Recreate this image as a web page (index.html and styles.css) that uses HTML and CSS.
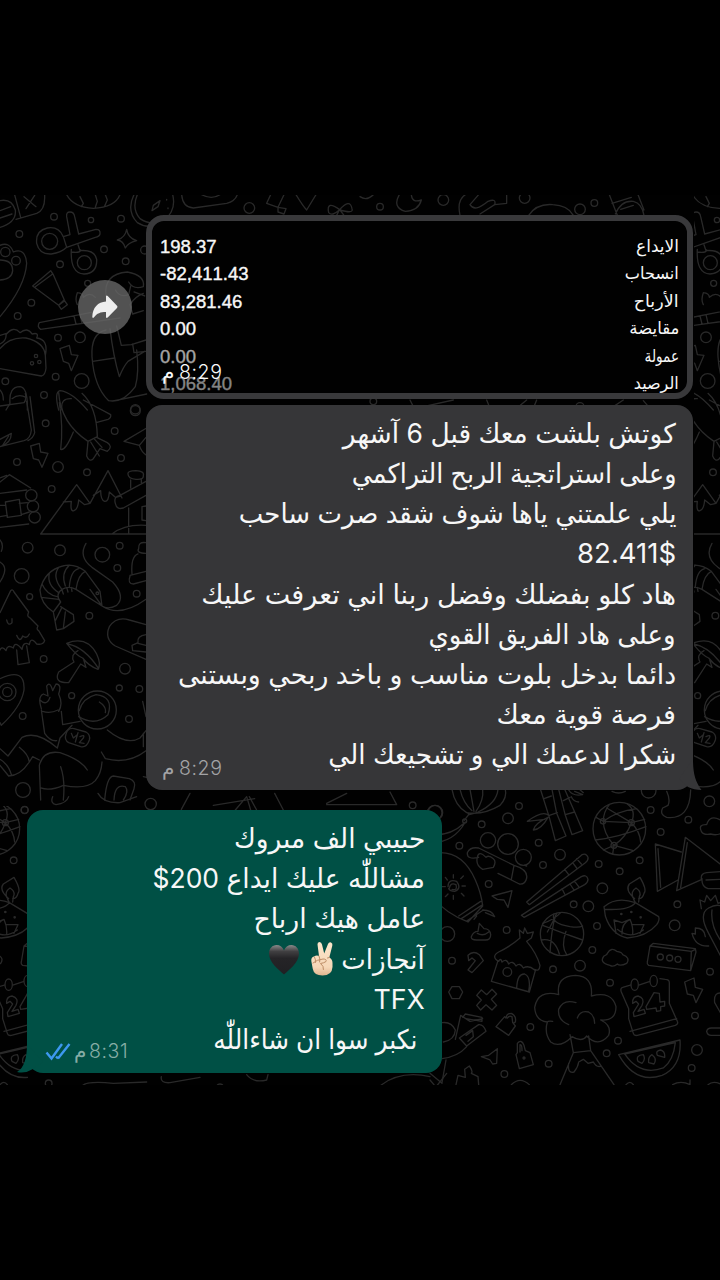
FILE: index.html
```html
<!DOCTYPE html>
<html lang="ar">
<head>
<meta charset="utf-8">
<title>محادثة</title>
<link rel="stylesheet" href="styles.css">
</head>
<body>
<main class="chat">
  <svg class="wallpaper" viewBox="0 195 720 890" width="720" height="890" aria-hidden="true">
    <defs>
      <g id="doodles">
        <!-- upper tools, snacks and sweets -->
        <g transform="translate(0 190) scale(.33333)">
          <path d="M40 0L62 82M48 88L110 70Q135 60 134 20V0M72 20L108 50M104 16L78 56M0 32Q35 25 46 60Q50 98 0 112M0 62L32 50M0 84L36 72"/>
          <path d="M200 14Q220 52 280 55Q345 52 360 14M240 20L250 40L244 50M286 14L292 34L286 52M316 14L322 30L314 48"/>
          <path d="M402 14Q378 62 412 98Q448 122 492 92Q530 60 518 14M412 14Q394 56 420 86Q452 108 480 92M456 62L460 46L480 32L474 50ZM500 28v2M504 54v2"/>
          <path d="M545 14Q548 52 580 54L680 40Q705 34 712 14M605 14Q635 30 660 14M800 40L812 14M800 40L834 52L852 14M834 52L858 56L852 72L834 66ZM888 14Q910 50 920 60L948 14"/>
          <path d="M1018 58Q978 30 986 68Q996 80 1018 60Q1050 24 1056 56Q1062 72 1020 60M1018 60L1010 76M1020 60L1032 76"/>
          <path d="M200 80Q198 66 210 66Q222 66 224 80L236 132L288 118Q302 118 300 132Q298 140 286 142L200 172L190 140L210 134Z"/>
          <path d="M190 140Q176 108 142 114Q106 122 110 160Q118 194 154 192Q184 188 200 172M214 178Q210 250 252 252Q292 250 290 208Q284 178 240 182L234 164M214 186Q240 190 242 180"/>
          <circle cx="149" cy="154" r="24"/><circle cx="253" cy="218" r="21"/>
          <path d="M380 118Q384 144 410 152Q384 158 376 174Q370 152 352 150Q376 142 380 118Z"/>
          <circle cx="162" cy="80" r="10"/><circle cx="273" cy="90" r="8"/><circle cx="363" cy="86" r="10"/><circle cx="58" cy="132" r="10"/><circle cx="312" cy="178" r="10"/><circle cx="377" cy="214" r="10"/><circle cx="180" cy="223" r="10"/><circle cx="94" cy="338" r="10"/><circle cx="53" cy="378" r="10"/><circle cx="263" cy="280" r="9"/><circle cx="434" cy="180" r="12"/><circle cx="748" cy="54" r="16"/>
          <path d="M0 166Q28 154 40 186Q76 172 80 220Q76 290 0 380M0 210Q38 210 38 242Q36 268 0 270"/><circle cx="16" cy="186" r="14"/><circle cx="48" cy="212" r="13"/>
          <path d="M98 288L152 242L160 254L194 332L176 346ZM106 290L158 252M176 346L192 330L202 344L184 358Z"/>
          <path d="M232 308Q224 330 232 344M232 308Q250 310 250 322Q270 304 286 322M360 384L122 418Q110 410 118 398L350 352M222 378L228 402M240 374L246 400"/>
          <path d="M318 318Q310 252 382 246Q436 256 430 290Q400 300 386 276M430 310Q404 320 390 344L398 372L430 362M346 300Q360 324 386 314L392 288M402 306L434 318M330 416Q340 500 358 560Q370 530 384 514L434 484M350 408L364 466L394 464L438 450M398 462L402 488L438 484"/>
          <path d="M318 420Q272 430 276 500Q282 590 326 632Q370 640 406 590Q418 548 410 480M278 514L344 504M346 632L440 612"/>
          <path d="M0 462Q20 452 18 434Q40 406 60 428Q82 410 96 432Q118 426 110 444Q146 448 136 496L138 534Q136 556 124 558L0 536M0 476Q28 440 78 444Q132 456 136 496M0 436L20 430"/>
          <circle cx="108" cy="498" r="5"/><circle cx="96" cy="520" r="5"/><circle cx="118" cy="516" r="5"/>
          <path d="M180 476L208 466L214 494L234 496L214 542L206 520L190 514Z"/>
          <circle cx="174" cy="443" r="10"/><circle cx="240" cy="442" r="16"/><circle cx="167" cy="560" r="10"/><circle cx="245" cy="573" r="22"/><circle cx="132" cy="615" r="10"/><circle cx="16" cy="574" r="10"/><circle cx="406" cy="658" r="14"/>
          <path d="M30 640Q26 590 60 590Q84 592 82 660M30 640L18 660M36 626Q56 610 78 622M0 600Q10 610 10 630M176 660Q162 606 180 602Q216 606 262 660M186 660Q180 624 214 626"/>
        </g>
        <!-- rocket, mountains, sea life and astronaut -->
        <g transform="translate(0 400) scale(.33333)">
          <path d="M176 -22Q182 70 264 124L292 110Q290 20 246 -20M178 8Q190 80 182 148Q196 154 220 96M250 0L332 44Q334 54 324 58L288 68M264 124L260 168Q268 188 280 176L300 146L322 154Q340 140 322 128L290 112M272 126L298 168M284 118L306 142"/>
          <path d="M0 18L72 8Q80 0 76 -20M80 4L94 90Q92 116 72 122L0 140M90 -10L104 98Q100 114 84 122M0 118L34 100Q34 130 0 140M8 136L26 108"/>
          <path d="M92 138L118 130L122 156L144 160L126 202L116 180L100 176Z"/>
          <path d="M372 124L440 84M372 124L418 136L438 112M418 136Q424 156 440 166"/>
          <circle cx="406" cy="32" r="15"/><circle cx="344" cy="93" r="10"/><circle cx="137" cy="70" r="10"/><circle cx="51" cy="186" r="10"/><circle cx="174" cy="201" r="16"/><circle cx="363" cy="174" r="10"/><circle cx="261" cy="217" r="10"/><circle cx="155" cy="267" r="10"/>
          <path d="M0 246L28 224L92 264M0 234L20 226M0 280L80 270M0 382L86 372M0 316L16 316M16 306L58 298L64 346L22 352ZM58 310L82 308M64 344L88 336M0 350L22 346"/>
          <circle cx="94" cy="286" r="17"/><circle cx="99" cy="319" r="17"/><circle cx="104" cy="352" r="17"/>
          <path d="M122 402L230 254L270 310L324 212L366 294M122 402H438M190 306L214 304Q210 336 222 332Q234 328 236 300L254 314L270 310M280 286L302 272Q302 300 314 304Q326 306 328 276L346 292L362 288M346 310Q340 290 360 286L438 244M346 310Q350 330 370 324L438 286M384 222Q382 212 408 212Q434 214 430 226Q432 240 408 238Q384 236 384 222M392 240V264M424 238V252M386 324V402M336 402Q374 372 438 376M438 318L426 320V360L438 362"/>
          <circle cx="83" cy="443" r="16"/><circle cx="180" cy="451" r="16"/><circle cx="307" cy="464" r="22"/><circle cx="359" cy="437" r="10"/><circle cx="352" cy="504" r="10"/><circle cx="65" cy="528" r="22"/><circle cx="410" cy="581" r="10"/><circle cx="89" cy="590" r="9"/><circle cx="268" cy="647" r="10"/><circle cx="131" cy="777" r="10"/><circle cx="375" cy="806" r="16"/><circle cx="358" cy="864" r="9"/><circle cx="418" cy="867" r="10"/><circle cx="215" cy="887" r="9"/><circle cx="387" cy="957" r="10"/><circle cx="68" cy="948" r="10"/><circle cx="69" cy="1170" r="22"/>
          <path d="M0 420Q12 434 4 454M0 486Q24 500 8 532L0 546"/>
          <path d="M306 618L228 568Q234 524 256 514L300 574ZM256 514Q222 488 188 498Q134 512 120 570Q122 612 160 636L182 606Q164 584 186 568Q206 556 228 568M236 506Q212 512 208 560M208 496Q182 520 196 558M176 502Q156 530 184 566M148 520Q140 554 176 578M126 552Q140 584 172 590M124 592L176 598M160 636L170 690L190 686L222 664L220 644L182 620M166 662L184 626M190 684L196 636M186 570l4 12M200 562l4 14M214 562l2 12M258 430Q234 470 276 502L338 546Q378 590 350 616Q324 630 306 618M270 568L306 618Q360 654 438 598"/><circle cx="292" cy="580" r="4"/>
          <path d="M438 428Q414 424 416 446Q408 460 438 460M396 522Q392 470 414 462M390 528Q382 552 400 552L438 542M390 526L438 514"/>
          <path d="M32 572L0 638M32 572Q38 566 42 576L86 636Q80 650 88 652L114 678Q108 688 116 692L134 722Q130 736 110 732M110 732Q92 708 88 734Q70 722 66 748Q44 720 40 744Q22 732 18 752Q6 736 0 750M20 660Q24 680 36 668V656M50 706Q60 730 68 708Q80 718 88 702M50 750L54 794L88 788L80 738"/>
          <path d="M200 730Q260 706 290 762Q304 792 294 808Q266 798 248 774Q228 766 200 730ZM204 732Q254 742 296 806M234 752Q210 764 222 786L176 816Q160 850 206 848L242 792L258 802L250 776"/>
          <path d="M438 674L388 660Q350 648 328 680Q312 716 346 738L438 778M438 704Q410 708 414 728L396 736L398 752L438 756M414 730L438 736"/>
          <path d="M0 836Q76 800 72 870Q64 920 4 976L0 968"/><circle cx="22" cy="876" r="26"/><circle cx="22" cy="876" r="14"/>
          <circle cx="292" cy="930" r="57"/><path d="M236 950Q286 980 324 944Q342 890 288 884Q248 894 238 932M298 906Q320 920 316 938M124 926Q112 890 130 882L144 888L140 858Q150 842 158 872L168 852Q186 852 176 882Q190 912 176 934M128 934Q150 942 174 930M124 930L134 1000Q150 1024 170 1022M184 934L188 974L240 964M120 900Q140 920 150 892M0 1046L24 1068L66 1012Q110 990 172 1044L180 1014L216 976M58 1042Q86 1064 88 1086Q60 1128 26 1128L0 1096M0 1078Q26 1094 34 1124M88 1086L98 1070L118 1080M118 1096Q130 1050 180 1058Q244 1080 262 1110M118 1096L122 1200M182 1100Q196 1140 190 1200M122 1164Q150 1174 190 1156Q260 1170 286 1142Q304 1120 306 1086M304 1056L316 1076Q384 1094 438 1052M322 990Q380 1038 420 1014L438 992M430 1000V1040M428 904L438 950"/>
          <path d="M198 1002Q204 982 222 986L258 996Q272 1004 268 1020Q260 1044 242 1040L206 1028Q192 1020 198 1002ZM214 1000L220 1014L232 1004M234 998L226 1026M240 1010Q256 1002 250 1014L238 1028L252 1030"/>
          <path d="M314 1200Q320 1130 340 1128L388 1136Q410 1144 402 1166L390 1200M342 1200Q344 1150 376 1160Q388 1174 370 1200M430 1130L440 1132"/>
        </g>
        <!-- lower field of party and travel drawings -->
        <g transform="translate(430 780) scale(.33333)">
          <circle cx="16" cy="98" r="22"/><circle cx="267" cy="78" r="10"/><circle cx="234" cy="115" r="16"/><circle cx="155" cy="133" r="10"/><circle cx="88" cy="197" r="10"/><circle cx="326" cy="188" r="10"/><circle cx="390" cy="224" r="16"/><circle cx="339" cy="255" r="10"/><circle cx="176" cy="312" r="10"/><circle cx="506" cy="252" r="10"/><circle cx="569" cy="274" r="10"/><circle cx="629" cy="241" r="10"/><circle cx="517" cy="325" r="16"/><circle cx="475" cy="379" r="16"/><circle cx="431" cy="373" r="10"/><circle cx="501" cy="438" r="10"/><circle cx="487" cy="510" r="10"/><circle cx="742" cy="373" r="10"/><circle cx="734" cy="436" r="16"/><circle cx="230" cy="450" r="10"/><circle cx="52" cy="462" r="22"/><circle cx="66" cy="542" r="10"/><circle cx="369" cy="568" r="10"/><circle cx="450" cy="557" r="16"/><circle cx="540" cy="608" r="10"/><circle cx="840" cy="575" r="10"/><circle cx="795" cy="707" r="10"/><circle cx="801" cy="810" r="16"/><circle cx="785" cy="864" r="10"/><circle cx="564" cy="782" r="10"/><circle cx="530" cy="820" r="10"/><circle cx="301" cy="741" r="10"/><circle cx="356" cy="851" r="10"/><circle cx="223" cy="882" r="10"/><circle cx="662" cy="90" r="10"/><circle cx="838" cy="64" r="16"/><circle cx="775" cy="119" r="10"/><circle cx="692" cy="156" r="10"/><circle cx="656" cy="32" r="22"/>
          <path d="M66 28Q74 76 110 98Q160 106 210 76Q232 52 226 28M90 28Q100 70 126 92M120 28Q126 60 132 94M158 28Q162 60 138 94M204 28Q200 70 144 96M112 98L118 104L140 98M116 104L102 122M0 164Q60 170 102 130M0 188Q70 190 106 126"/><circle cx="104" cy="123" r="6"/>
          <circle cx="174" cy="181" r="23"/><circle cx="234" cy="192" r="31"/><circle cx="280" cy="232" r="24"/>
          <path d="M146 232Q110 240 112 218Q120 200 146 204L252 256Q294 268 290 294Q286 314 268 312L204 280M168 232Q146 210 142 232Q136 256 158 268L190 262Q200 244 190 236Q176 224 168 232M252 256L244 298M290 258L284 256"/>
          <path d="M0 222Q92 200 136 300Q154 340 158 378L114 426Q50 402 0 346M86 408L152 364M94 416L158 374M112 422L160 390M158 390Q186 390 194 410L166 398M132 418L140 408M58 324Q62 306 78 314Q84 332 66 328M54 320Q54 296 80 304Q96 326 74 334Q60 334 56 326M70 284v10M46 292l6 8M36 320h10M46 350l8-8M70 346v12M94 340l8 8M96 318h10M92 296l8-8"/>
          <path d="M186 348L246 332L234 382L222 360L202 358ZM124 470Q130 454 144 454L148 430L162 446Q180 446 182 464Q182 480 166 480H140Q122 480 124 470M142 460Q160 470 176 456"/>
          <path d="M290 366L456 224Q468 218 474 232Q476 240 466 248L298 374ZM274 406L454 290Q470 282 474 298Q474 308 464 314L282 412ZM404 268L416 284M428 248L440 264M440 236L454 252M396 326L404 342M420 312L432 330M434 304L446 320"/>
          <path d="M332 30L358 112L376 182L408 168L380 100L366 28M342 56L364 48M358 106L382 98M386 28L406 106L426 164L458 152L434 96L404 28M400 62L420 52M406 104L434 96M356 106Q338 90 292 124L344 118M354 112Q314 130 310 150Q334 148 354 112M416 30Q428 50 458 44L434 34M424 50Q430 64 446 66M448 28L460 38M546 34Q566 44 586 34"/>
          <circle cx="568" cy="146" r="79"/><path d="M498 112L520 124Q560 94 620 86M520 124L604 128Q620 92 592 72M496 180Q560 174 648 140M520 124Q520 160 552 196L610 212M552 196Q590 170 604 128M604 128L644 118M552 196L520 210M538 74Q520 96 520 124M530 84L604 128M552 196L548 222M604 128Q630 154 632 186"/><circle cx="519" cy="124" r="8"/><circle cx="604" cy="128" r="9"/><circle cx="552" cy="196" r="9"/>
          <path d="M710 34Q722 60 714 76L698 84Q688 104 710 112Q780 120 782 30M814 154Q804 132 830 134Q840 102 872 120M814 154Q820 166 842 162Q860 168 878 158M676 192L682 334L744 300M676 192L754 216M684 206L692 322M766 172L740 332L816 298M766 172L876 256M772 188L752 322M814 296Q812 280 830 278L880 274M816 296Q814 320 834 326H878M828 300L878 298"/>
          <path d="M614 356Q584 330 598 312L630 292Q652 330 642 340Q638 356 626 356M608 352Q602 334 618 324Q636 336 628 350L626 366M610 356L616 368M522 380Q560 348 616 368L686 410Q690 420 680 434Q650 470 592 474Q544 464 526 408ZM524 388Q600 392 616 368M558 460L552 420L576 428L600 418Q610 440 608 464M576 462Q574 430 600 418M608 434L642 434L630 460M562 448Q600 480 640 450"/><circle cx="574" cy="402" r="2"/><circle cx="604" cy="396" r="2"/><circle cx="632" cy="412" r="2"/>
          <circle cx="396" cy="462" r="65"/><path d="M372 402Q360 430 420 440Q448 444 458 438M338 436Q400 460 458 480M392 398Q372 420 338 430M334 480Q374 472 388 522M360 518Q366 430 380 400M352 456Q372 420 380 400M408 454Q392 500 410 524"/>
          <path d="M206 544Q182 530 206 516Q240 500 270 474L268 450L280 460L284 444L292 460L310 456L304 474L290 484Q320 520 330 556Q328 576 314 568M206 544Q212 532 216 546Q230 534 236 552Q248 540 258 558Q270 546 280 564Q296 554 314 570M204 542L184 604L298 636L316 572M260 624Q262 580 284 582Q304 590 296 634"/><circle cx="232" cy="576" r="13"/>
          <path d="M114 526Q130 510 148 524L160 542L126 578L114 570L136 542L126 534L116 542ZM56 636L66 620H88L98 636L88 656H66ZM140 646L154 630L170 644L186 628L200 642L184 658L200 676L186 690L168 674L152 690L140 676L154 660Z"/>
          <path d="M540 556Q506 548 522 528Q532 524 532 520Q544 500 560 514Q576 516 578 524Q602 532 590 550Q570 560 562 552Q550 562 540 556ZM660 498L670 490L796 506L798 516L782 572L656 556Q650 552 652 546ZM660 498L784 514L782 570M784 514L796 508"/><circle cx="691" cy="531" r="9"/><circle cx="719" cy="534" r="9"/><circle cx="744" cy="538" r="9"/>
          <path d="M386 644Q378 588 436 586Q490 588 484 648Q546 632 558 680Q558 724 512 720Q546 736 536 766Q504 804 470 768Q456 788 426 770Q390 806 362 786Q342 760 352 726Q316 722 314 682Q324 628 386 644M438 668Q400 656 386 688Q382 720 416 734M442 714Q450 690 476 696Q494 706 494 730M352 726Q354 722 368 724M420 764L430 818L390 914M476 768L482 812L552 914M430 818L482 812M416 850Q412 882 432 876Q444 862 446 846L460 838L474 850L490 846Q500 864 514 858"/>
          <path d="M606 614L578 622Q570 624 574 636L596 686V716L610 760Q612 768 622 766L736 736Q746 732 742 724L718 670V608Q718 598 706 598L690 596M624 616L660 604M600 754L740 716"/><ellipse cx="614" cy="614" rx="11" ry="17" fill="#010101"/><ellipse cx="671" cy="603" rx="11" ry="17" fill="#010101"/>
          <path d="M608 670Q606 650 624 648Q646 654 636 676L624 694L642 688L646 700L612 710L610 698L626 672L618 664ZM648 680L672 638L688 640L690 666L704 664L704 678L692 680L692 692L680 694L678 684L650 688Z"/>
          <path d="M764 606L792 594L796 622L818 628L798 668L790 646L772 642Z"/>
          <path d="M566 824L750 780Q756 860 696 886Q616 914 566 824ZM584 822L736 788Q730 842 700 864Q630 890 584 822M624 844Q616 826 640 824Q648 838 636 850ZM656 848Q654 830 666 824Q682 836 672 852ZM682 826Q676 812 692 810Q706 814 704 832Z"/>
          <path d="M198 740L224 710L228 714Q230 700 244 700Q260 708 256 726L250 730L256 738L236 766ZM232 714Q238 706 246 710L248 728M258 824L262 818V790Q274 776 282 796L286 812L300 818L310 854L268 866ZM270 816V794Q276 792 276 812M154 830L176 826L202 806L200 850L188 852L180 840Z"/><circle cx="282" cy="834" r="3"/>
          <path d="M36 728Q64 724 76 750Q74 780 40 786M76 778L92 706L120 724L158 716M98 712L106 702L156 712L156 724L108 716M88 774L146 734Q160 732 168 754L110 798ZM108 766L128 752L130 770L114 784M36 836Q84 830 110 800M48 840L36 908M0 880L36 910M78 914L84 886L106 892L104 868L118 858Q130 874 124 880L144 890L146 914M244 914Q270 888 298 914M0 900L12 914M728 914Q752 900 780 914V900M588 914Q600 900 610 914M834 914Q850 900 876 914"/>
          <path d="M830 754Q832 744 844 744H880M830 754Q832 766 844 766H880M878 640Q850 634 854 668L878 710M814 386L810 360L824 366L830 346L842 362L856 346L864 370L878 366M836 384Q804 402 836 460L878 540M836 384Q860 370 878 380M846 390Q840 440 878 490M836 498Q796 500 786 460L796 462V444Q824 444 826 470"/>
        </g>
        <!-- strips between the bubbles -->
        <g transform="translate(360 190) scale(.33333)">
          <path d="M118 14Q96 52 136 64Q176 62 184 30Q156 40 154 14M0 20Q20 34 40 14M300 76Q290 30 316 14M330 44L356 14M330 44Q344 68 384 34Q410 24 404 44L360 72M404 44L440 40V14M506 76Q530 40 578 44Q624 46 640 76M748 14L772 76M756 40L814 22M766 72Q784 30 820 34Q846 40 852 76M782 58L820 46M834 14L852 60"/><circle cx="60" cy="50" r="10"/><circle cx="250" cy="30" r="16"/><circle cx="494" cy="24" r="16"/><circle cx="660" cy="58" r="16"/><circle cx="703" cy="39" r="10"/>
          <path d="M150 630L160 650M190 650L280 630M380 630L390 655M470 655L500 630M520 655L530 630M760 650L790 630M850 632L870 655"/><circle cx="40" cy="634" r="10"/><circle cx="660" cy="650" r="12"/>
        </g>
        <g transform="translate(0 800) scale(.33333)">
          <path d="M158 -10Q150 10 168 14Q200 10 206 -10M294 -20Q310 10 360 8L410 -10M544 28L570 -20M640 16L764 -4M706 30L740 -10L752 30M770 30L748 -10M980 10L1040 -20M980 14H1190L1170 -24M824 -20L850 30M484 830Q480 850 510 848L600 832M740 824Q760 850 800 840L804 824M246 858Q260 842 340 850L440 846M1140 858Q1200 810 1290 830M1310 858L1340 820"/><circle cx="74" cy="30" r="11"/><circle cx="452" cy="12" r="17"/><circle cx="1238" cy="16" r="10"/><circle cx="1304" cy="38" r="22"/><circle cx="146" cy="850" r="10"/><circle cx="660" cy="862" r="10"/>
        </g>
      </g>
    </defs>
    <rect y="195" width="720" height="890" fill="#010101"/>
    <use href="#doodles" class="ink"/>
    <svg x="694" y="195" width="26" height="600" viewBox="694 195 26 600"><use href="#doodles" x="626" class="ink"/></svg>
    <svg x="0" y="806" width="28" height="279" viewBox="0 806 28 279"><use href="#doodles" x="-626" class="ink"/></svg>
  </svg>

  <div class="thread">
    <div class="row">
      <button class="forward" aria-label="إعادة توجيه">
        <svg width="28" height="24" viewBox="0 0 28 24"><path d="M15 1.3V6.500C7 7 1.500 12.500 1.300 22Q1.800 23.600 3 22.300C6 18.300 9.500 17 15 17V22Q15.300 23.600 16.700 22.500L26 13Q27 11.800 26 10.700L16.700 1Q15.400 0 15 1.300Z"/></svg>
      </button>
      <article class="bubble photo" dir="rtl">
        <dl class="stats">
          <div><dt><span class="fit">الايداع</span></dt><dd>198.37</dd></div>
          <div><dt><span class="fit x95">انسحاب</span></dt><dd>-82,411.43</dd></div>
          <div><dt><span class="fit x103">الأرباح</span></dt><dd>83,281.46</dd></div>
          <div><dt><span class="fit x97">مقايضة</span></dt><dd>0.00</dd></div>
          <div><dt><span class="fit x80">عمولة</span></dt><dd class="dim">0.00</dd></div>
          <div><dt><span class="fit x94">الرصيد</span></dt><dd class="dimmer">1,068.40</dd></div>
        </dl>
        <time class="time over" dir="ltr"><i>م</i><span>8:29</span></time>
      </article>
    </div>

    <article class="bubble incoming" dir="rtl">
      <p><span class="fit x98">كوتش بلشت معك قبل 6 آشهر</span></p>
      <p><span class="fit x94">وعلى استراتجية الربح التراكمي</span></p>
      <p><span class="fit x96">يلي علمتني ياها شوف شقد صرت ساحب</span></p>
      <p><span class="fit x102" dir="ltr">82.411$</span></p>
      <p><span class="fit">هاد كلو بفضلك وفضل ربنا اني تعرفت عليك</span></p>
      <p><span class="fit x96">وعلى هاد الفريق القوي</span></p>
      <p><span class="fit x99">دائما بدخل بلوت مناسب و باخد ربحي وبستنى</span></p>
      <p><span class="fit">فرصة قوية معك</span></p>
      <p><span class="fit x97">شكرا لدعمك الي و تشجيعك الي</span></p>
      <time class="time" dir="ltr"><i>م</i><span>8:29</span></time>
      <svg class="tail" width="24" height="32" viewBox="0 0 24 32"><path d="M14 0C14 14 16 22 22.500 31Q15 31 9 28L0 20Z"/></svg>
    </article>

    <article class="bubble outgoing" dir="rtl">
      <p><span class="fit x98">حبيبي الف مبروك</span></p>
      <p><span class="fit x98">مشاللّٰه عليك ايداع <bdi dir="ltr">$200</bdi></span></p>
      <p><span class="fit x99">عامل هيك ارباح</span></p>
      <p class="emoji-line"><span class="fit x96">آنجازات</span>
        <svg class="hand" width="24" height="36" viewBox="0 0 24 36" role="img" aria-label="✌🏻"><defs><linearGradient id="skin" x1="0" y1="0" x2="0" y2="1"><stop offset="0" stop-color="#fbe6cb"/><stop offset=".75" stop-color="#f6d7b7"/><stop offset="1" stop-color="#dfb58f"/></linearGradient></defs><path fill="url(#skin)" d="M7.500 3.500Q7.300 1 9.500 1Q11.500 1 12 3.500L14.200 12.500L18 3Q19 .7 21 1.400Q23 2.200 22.300 4.800L19.300 16.500Q22.500 18 22.500 22V26Q22 34.500 12.500 34.500Q4 34.500 2.800 28L1.300 20Q1 16 4 15.500Q6.500 14 9 15Z"/><path fill="none" stroke="#bd8d66" stroke-width="1" stroke-linecap="round" d="M4.500 16Q6 19 5.500 21.500M9 15Q10.500 18 9.700 21M3 22Q7 18.500 13 18Q17 18 16 20.500Q14 22 10.500 22.500Q14 25 13.500 28.500M19.300 16.500L17.500 17"/></svg>
        <svg class="heart" width="32" height="31" viewBox="0 0 32 31" role="img" aria-label="🖤"><defs><linearGradient id="gloss" x1="0" y1="0" x2="0" y2="1"><stop offset="0" stop-color="#8a8a8a"/><stop offset=".22" stop-color="#403f41"/><stop offset=".45" stop-color="#252427"/><stop offset="1" stop-color="#202023"/></linearGradient></defs><path fill="url(#gloss)" d="M16 30.500C11 26 1 18.500 1 9.500C1 4.500 4.500 1 8.500 1C12 1 14.800 3 16 6.500C17.200 3 20 1 23.500 1C27.500 1 31 4.500 31 9.500C31 18.500 21 26 16 30.500Z"/></svg>
      </p>
      <p><span class="fit x99" dir="ltr">TFX</span></p>
      <p class="last"><span class="fit x92">نكبر سوا ان شاءاللّٰه</span></p>
      <time class="time" dir="ltr"><svg class="ticks" width="26" height="19" viewBox="0 0 26 19"><path d="M1.500 10.500L6.500 16.500L17 2M13 16.500L24.500 2M11 14.500L13 16.500"/></svg><i>م</i><span>8:31</span></time>
      <svg class="tail" width="26" height="30" viewBox="0 0 26 30"><path d="M10 0C10 14 7 24 0 28Q8 30 16 25L26 18Z"/></svg>
    </article>
  </div>
</main>
</body>
</html>
```
FILE: styles.css
```css
* { box-sizing: border-box; }
body { margin: 0; background: #000; }
.chat {
  position: relative;
  width: 720px;
  height: 1280px;
  padding-top: 195px;
  overflow: hidden;
  background: #000;
  color: #f7f7f7;
  font-family: Inter, "DejaVu Sans", sans-serif;
}
.wallpaper { position: absolute; left: 0; top: 195px; }
.ink { fill: none; stroke: #292929; stroke-width: 4px; stroke-linecap: round; stroke-linejoin: round; }
.thread { position: relative; display: flex; flex-direction: column; padding: 20px 27px; }
.row { display: flex; justify-content: flex-end; align-items: center; gap: 14px; margin-bottom: 6px; }
.forward {
  display: grid; place-items: center; width: 54px; height: 54px; padding: 0;
  border: 0; border-radius: 50%; background: rgba(105, 105, 105, .78);
}
.forward path { fill: #ededed; }
.bubble { position: relative; }
.bubble p { margin: 0; height: 40.150px; line-height: 40.150px; font-size: 27px; white-space: nowrap; }

/* condensed or widened lines, anchored at the right edge */
.fit { display: inline-block; transform-origin: 100% 50%; }
.x80 { transform: scaleX(.8); }
.x92 { transform: scaleX(.918); }
.x94 { transform: scaleX(.943); }
.x95 { transform: scaleX(.95); }
.x96 { transform: scaleX(.963); }
.x97 { transform: scaleX(.974); }
.x98 { transform: scaleX(.98); }
.x99 { transform: scaleX(.992); }
.x102 { transform: scaleX(1.02); }
.x103 { transform: scaleX(1.03); }

.photo {
  width: 547px; height: 184px; padding: 12px 8px 0; overflow: hidden;
  border: 6px solid #39393b; border-radius: 18px; background: #010101;
}
.stats { margin: 0; }
.stats div { display: flex; justify-content: space-between; height: 27.400px; line-height: 27.400px; white-space: nowrap; }
.stats dt { font-size: 17px; }
.stats dd { margin: 0; direction: ltr; font: 18.500px/27.400px "Liberation Sans", sans-serif; font-kerning: none; -webkit-text-stroke: .4px; }
.stats .dim { color: #a5a5a5; }
.stats .dimmer { color: #858585; }
.time { position: absolute; display: flex; align-items: center; gap: 5px; left: 16px; bottom: 10px; height: 24px; font-size: 19.500px; font-weight: 300; letter-spacing: .6px; color: #a3a3a5; }
.time i { font-style: normal; }
.time.over { left: 10px; bottom: 9px; color: #fafafa; }
.incoming { align-self: flex-end; width: 547px; height: 385px; padding: 9px 17px; border-radius: 16px; background: #363638; }
.outgoing { width: 415px; height: 263px; margin-top: 20px; padding: 9px 17px; border-radius: 16px; background: #005045; }
.tail { position: absolute; bottom: -1px; }
.incoming .tail { right: -10px; fill: #363638; }
.outgoing .tail { left: -10px; fill: #005045; }
.emoji-line { display: flex; align-items: center; }
.emoji-line .fit { position: relative; top: 1px; }
.hand { margin-right: 4px; }
.heart { margin-right: 10px; }
.outgoing .last { padding-right: 8px; }
.outgoing .time { left: 18px; gap: 3px; color: #86ada5; }
.ticks { fill: none; stroke: #3d98f0; stroke-width: 2.400px; }
```
